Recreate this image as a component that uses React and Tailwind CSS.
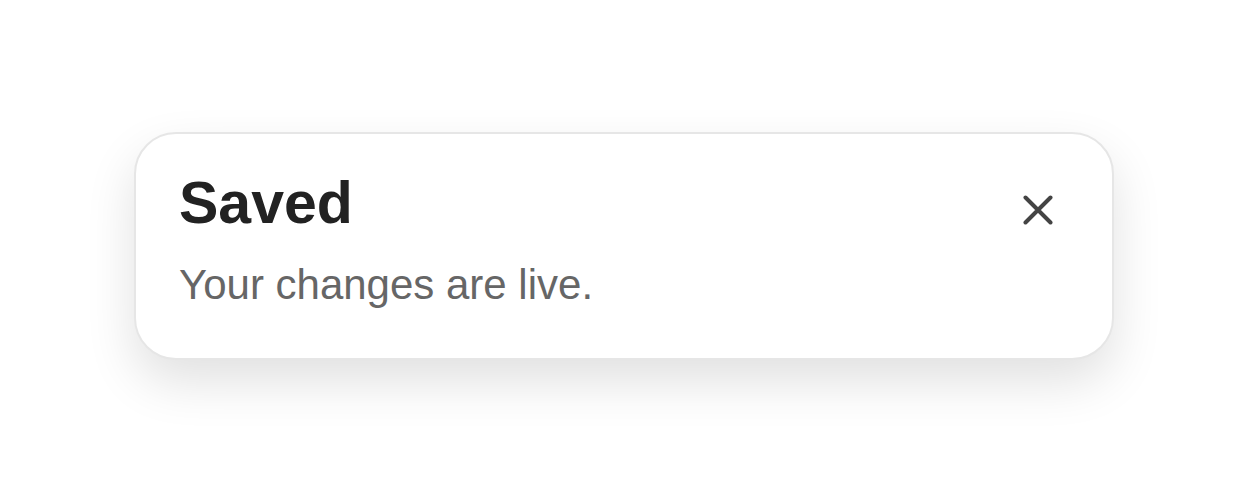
export default function App() {
  return (
    <div className="min-h-screen w-full bg-white flex items-center justify-center" style={{ fontFamily: '"Liberation Sans", Arial, sans-serif' }}>
      <div className="w-[980px] rounded-[42px] border-2 border-[#e6e6e6] bg-white shadow-[0_22px_50px_rgba(0,0,0,0.12)] pl-[43px] pr-[44px] pt-[40px] pb-[52px] flex items-start justify-between">
        <div className="flex flex-col">
          <h1 className="text-[59px] leading-none font-bold text-[#222222] m-0">Saved</h1>
          <p className="mt-[31px] text-[42px] leading-none text-[#666666]">Your changes are live.</p>
        </div>
        <button className="mt-[21px] mr-[15px] w-[30px] h-[30px] flex items-center justify-center text-[#444444]" aria-label="Close">
          <svg width="30" height="30" viewBox="0 0 30 30" fill="none" stroke="currentColor" strokeWidth="4" strokeLinecap="round">
            <path d="M2.5 2.5 L27.5 27.5 M27.5 2.5 L2.5 27.5" />
          </svg>
        </button>
      </div>
    </div>
  );
}
